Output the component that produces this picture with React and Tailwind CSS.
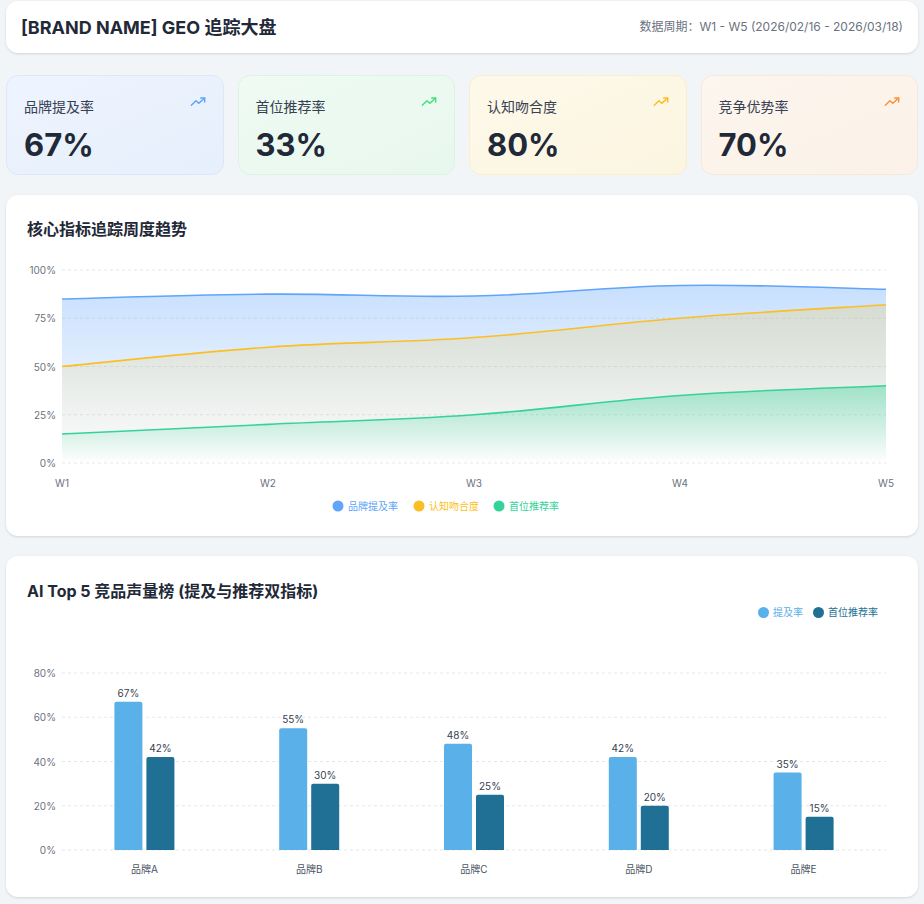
import React from "react";

const F = { fontFamily: '"Inter","Noto Sans CJK SC",sans-serif' };

function smooth(pts) {
  let d = `M${pts[0][0]},${pts[0][1]}`;
  for (let i = 0; i < pts.length - 1; i++) {
    const p0 = pts[i - 1] || pts[i], p1 = pts[i], p2 = pts[i + 1], p3 = pts[i + 2] || p2;
    const t = 0.2;
    const c1 = [p1[0] + (p2[0] - p0[0]) * t, p1[1] + (p2[1] - p0[1]) * t];
    const c2 = [p2[0] - (p3[0] - p1[0]) * t, p2[1] - (p3[1] - p1[1]) * t];
    d += ` C${c1[0]},${c1[1]} ${c2[0]},${c2[1]} ${p2[0]},${p2[1]}`;
  }
  return d;
}

const Trend = ({ c }) => (
  <svg width="16" height="16" viewBox="0 0 24 24" fill="none" stroke={c} strokeWidth="2.2" strokeLinecap="round" strokeLinejoin="round">
    <polyline points="2 17 9 10 13 14 22 6" />
    <polyline points="16 6 22 6 22 12" />
  </svg>
);

function LineChart() {
  const X0 = 56, W = 824, Y0 = 209, H = 193; // relative to svg (svg top at page y 255)
  const xs = [0, 1, 2, 3, 4].map(i => X0 + (W * i) / 4);
  const y = v => Y0 - (H * v) / 100;
  const series = [
    { c: "#60a5fa", v: [85, 87.5, 86.5, 92, 90], id: "gb" },
    { c: "#fbbf24", v: [50, 60, 65, 75, 82], id: "gy" },
    { c: "#34d399", v: [15, 20, 25, 35, 40], id: "gg" },
  ];
  return (
    <svg width="911" height="270" className="block" style={F}>
      <defs>
        <linearGradient id="gb" x1="0" y1="0" x2="0" y2="1"><stop offset="0" stopColor="#60a5fa" stopOpacity="0.35" /><stop offset="1" stopColor="#60a5fa" stopOpacity="0" /></linearGradient>
        <linearGradient id="gy" x1="0" y1="0" x2="0" y2="1"><stop offset="0" stopColor="#fbbf24" stopOpacity="0.2" /><stop offset="1" stopColor="#fbbf24" stopOpacity="0" /></linearGradient>
        <linearGradient id="gg" x1="0" y1="0" x2="0" y2="1"><stop offset="0" stopColor="#34d399" stopOpacity="0.4" /><stop offset="1" stopColor="#34d399" stopOpacity="0" /></linearGradient>
      </defs>
      {[0, 25, 50, 75, 100].map(v => (
        <g key={v}>
          <line x1={X0} x2={X0 + W} y1={y(v)} y2={y(v)} stroke="#e5e7eb" strokeDasharray="3 3" />
          <text x={X0 - 6} y={y(v) + 4} textAnchor="end" fontSize="10" fill="#6b7280">{v}%</text>
        </g>
      ))}
      {series.map(s => {
        const pts = s.v.map((v, i) => [xs[i], y(v)]);
        const d = smooth(pts);
        return (
          <g key={s.id}>
            <path d={`${d} L${xs[4]},${Y0} L${xs[0]},${Y0} Z`} fill={`url(#${s.id})`} />
            <path d={d} fill="none" stroke={s.c} strokeWidth="1.6" />
          </g>
        );
      })}
      {["W1", "W2", "W3", "W4", "W5"].map((w, i) => (
        <text key={w} x={xs[i]} y={233} textAnchor="middle" fontSize="10" fill="#6b7280">{w}</text>
      ))}
      {[["品牌提及率", "#60a5fa", 332], ["认知吻合度", "#fbbf24", 413], ["首位推荐率", "#34d399", 493]].map(([t, c, x]) => (
        <g key={t}>
          <circle cx={x - 6 + 6} cy={252} r="5.5" fill={c} />
          <text x={x + 10} y={256} fontSize="10" fill={c}>{t}</text>
        </g>
      ))}
    </svg>
  );
}

function BarChart() {
  const X0 = 56, W = 824, Y0 = 230, H = 177; // svg top at page y 621
  const y = v => Y0 - (H * v) / 80;
  const data = [["品牌A", 67, 42], ["品牌B", 55, 30], ["品牌C", 48, 25], ["品牌D", 42, 20], ["品牌E", 35, 15]];
  return (
    <svg width="911" height="265" className="block" style={F}>
      {[0, 20, 40, 60, 80].map(v => (
        <g key={v}>
          <line x1={X0} x2={X0 + W} y1={y(v)} y2={y(v)} stroke="#e5e7eb" strokeDasharray="3 3" />
          <text x={X0 - 6} y={y(v) + 4} textAnchor="end" fontSize="10" fill="#6b7280">{v}%</text>
        </g>
      ))}
      {data.map(([n, a, b], i) => {
        const cx = X0 + (W / 5) * (i + 0.5);
        return (
          <g key={n}>
            <path d={`M${cx - 30},${Y0} V${y(a) + 2} Q${cx - 30},${y(a)} ${cx - 28},${y(a)} H${cx - 4} Q${cx - 2},${y(a)} ${cx - 2},${y(a) + 2} V${Y0} Z`} fill="#5ab0e8" />
            <path d={`M${cx + 2},${Y0} V${y(b) + 2} Q${cx + 2},${y(b)} ${cx + 4},${y(b)} H${cx + 28} Q${cx + 30},${y(b)} ${cx + 30},${y(b) + 2} V${Y0} Z`} fill="#1f7094" />
            <text x={cx - 16} y={y(a) - 5} textAnchor="middle" fontSize="10" fill="#374151">{a}%</text>
            <text x={cx + 16} y={y(b) - 5} textAnchor="middle" fontSize="10" fill="#374151">{b}%</text>
            <text x={cx} y={Y0 + 23} textAnchor="middle" fontSize="10" fill="#4b5563">{n}</text>
          </g>
        );
      })}
    </svg>
  );
}

const cards = [
  ["品牌提及率", "67%", "#60a5fa", "bg-gradient-to-br from-[#eef4ff] to-[#e6effc] border-[#dde8f7]"],
  ["首位推荐率", "33%", "#4ade80", "bg-gradient-to-br from-[#effbf3] to-[#e8f7ee] border-[#dcf3e4]"],
  ["认知吻合度", "80%", "#fbbf24", "bg-gradient-to-br from-[#fdf9ea] to-[#fcf5e0] border-[#f8efcc]"],
  ["竞争优势率", "70%", "#fb923c", "bg-gradient-to-br from-[#fdf6ee] to-[#fbf1e8] border-[#f6e9dc]"],
];

export default function App() {
  return (
    <div className="w-[924px] min-h-[904px] bg-[#f2f5f8] px-[6px] pt-[1px] pb-[6px] flex flex-col gap-[20px]" style={F}>
      <div className="h-[52px] bg-white rounded-xl shadow-sm flex items-center justify-between px-[15px]">
        <div className="text-[18px] font-bold text-[#1f2937]">[BRAND NAME] GEO 追踪大盘</div>
        <div className="text-[12px] text-[#6b7280]">数据周期：W1 - W5 (2026/02/16 - 2026/03/18)</div>
      </div>
      <div className="grid grid-cols-4 gap-[14px] mt-[2px]">
        {cards.map(([t, v, c, cls]) => (
          <div key={t} className={`h-[100px] rounded-xl border ${cls} px-[17px] pt-[18px]`}>
            <div className="flex justify-between items-start">
              <div className="text-[14px] text-[#374151] mt-[2px]">{t}</div>
              <Trend c={c} />
            </div>
            <div className="text-[31px] font-bold text-[#1f2937] leading-none mt-[12px]">{v}</div>
          </div>
        ))}
      </div>
      <div className="bg-white rounded-xl shadow-sm h-[341px] flex flex-col">
        <div className="text-[16px] font-bold text-[#1f2937] px-[21px] pt-[22px] h-[59px]">核心指标追踪周度趋势</div>
        <LineChart />
      </div>
      <div className="bg-white rounded-xl shadow-sm h-[341px] flex flex-col">
        <div className="text-[16px] font-bold text-[#1f2937] px-[21px] pt-[23px]">AI Top 5 竞品声量榜 (提及与推荐双指标)</div>
        <div className="flex justify-end gap-[10px] pr-[40px] mt-[2px] text-[10px]">
          <div className="flex items-center gap-[4px] text-[#5ab0e8]"><span className="w-[11px] h-[11px] rounded-full bg-[#5ab0e8]"></span>提及率</div>
          <div className="flex items-center gap-[4px] text-[#1f7094]"><span className="w-[11px] h-[11px] rounded-full bg-[#1f7094]"></span>首位推荐率</div>
        </div>
        <BarChart />
      </div>
    </div>
  );
}
